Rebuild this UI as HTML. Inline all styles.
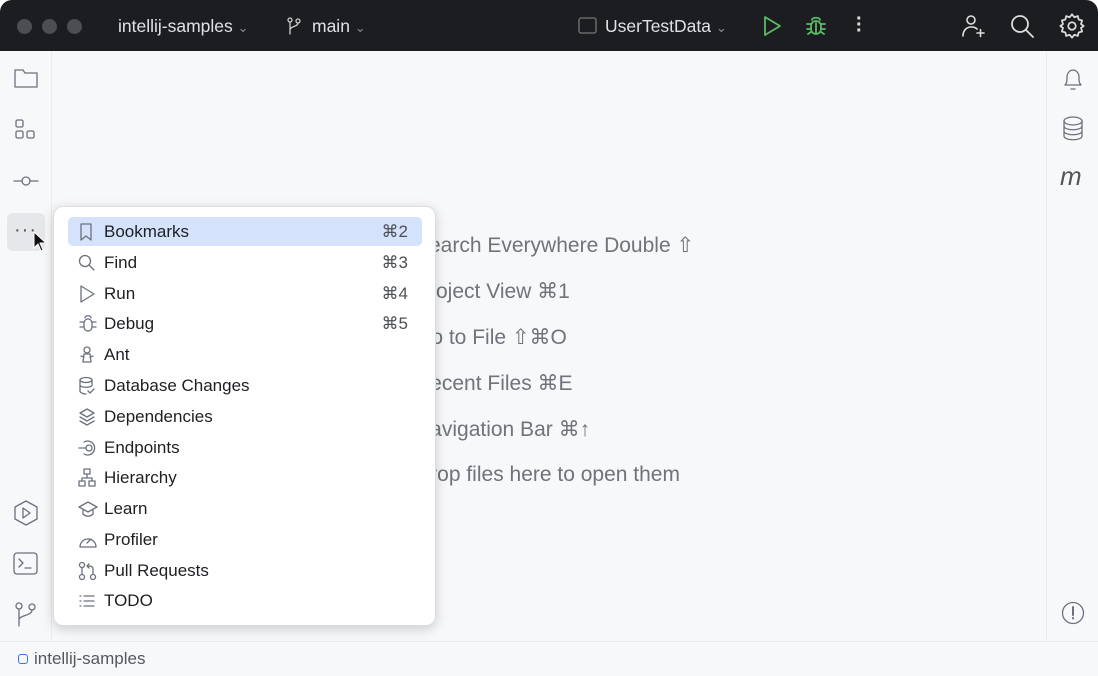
<!DOCTYPE html>
<html><head><meta charset="utf-8"><style>
*{margin:0;padding:0;box-sizing:border-box}
body{width:1098px;height:676px;background:#fff;font-family:"Liberation Sans",sans-serif;overflow:hidden;position:relative}
.win{position:absolute;left:0;top:0;width:1098px;height:676px;background:#f7f8fa;border-radius:12px 12px 0 0;overflow:hidden}
.title{position:absolute;left:0;top:0;width:1098px;height:51px;background:#1c1d20;color:#dfe1e5;font-size:17.5px}
.dot{position:absolute;top:19px;width:15px;height:15px;border-radius:50%;background:#4d4e52}
.t{position:absolute;top:16px}
.left{position:absolute;left:0;top:51px;width:52px;height:590px;border-right:1px solid #ebecf0}
.right{position:absolute;left:1046px;top:51px;width:52px;height:590px;border-left:1px solid #ebecf0}
.status{position:absolute;left:0;top:641px;width:1098px;height:35px;border-top:1px solid #ebecf0;font-size:17px;color:#55585e}
.hint{position:absolute;left:415px;font-size:21px;color:#6f737a;white-space:nowrap}
.menu{position:absolute;left:53px;top:206px;width:383px;height:420px;background:#fff;border-radius:10px;box-shadow:0 3px 12px rgba(0,0,0,.18);border:1px solid #dcdde0}
.it{position:absolute;left:14px;width:354px;height:29px;font-size:17px;color:#1e1f22;border-radius:5px}
.it span.l{position:absolute;left:36px;top:5px}
.it span.k{position:absolute;right:14px;top:5px;color:#4c4f55}
.it svg{position:absolute;left:10px;top:5px}
svg{fill:none;stroke:#6c707e;stroke-width:1.3;stroke-linecap:round;stroke-linejoin:round}
</style></head><body><div class="win">
<div class="title">
<div class="dot" style="left:17px"></div><div class="dot" style="left:42px"></div><div class="dot" style="left:67px"></div>
<div class="t" style="left:118px">intellij-samples <span style="color:#8a8c90;font-size:13px">&#8964;</span></div>
<svg style="position:absolute;left:286px;top:16px" width="16" height="20" viewBox="0 0 16 20"><g style="stroke:#ccc"><circle cx="4" cy="4" r="2"/><circle cx="12" cy="5" r="2"/><path d="M4 6v12M12 7c0 4-8 3-8 7"/></g></svg>
<div class="t" style="left:312px">main <span style="color:#8a8c90;font-size:13px">&#8964;</span></div>
<svg style="position:absolute;left:578px;top:17px" width="19" height="17"><rect x="1" y="1" width="17" height="15" rx="2" style="stroke:#777"/></svg>
<div class="t" style="left:605px">UserTestData <span style="color:#8a8c90;font-size:13px">&#8964;</span></div>
<svg style="position:absolute;left:762px;top:15px" width="20" height="22"><path d="M3 2l15 9-15 9z" style="stroke:#5fb865;stroke-width:1.8"/></svg>
<svg style="position:absolute;left:804px;top:14px" width="24" height="24" viewBox="0 0 24 24"><g style="stroke:#5fb865;stroke-width:1.8"><path d="M8 6c0-3 8-3 8 0"/><rect x="7" y="7" width="10" height="13" rx="5"/><path d="M12 9v10M3 10h4M17 10h4M3 15h4M17 15h4M4 20l3-2M20 20l-3-2"/></g></svg>
<div style="position:absolute;left:856px;top:16px;width:4px;height:20px;color:#ddd;font-size:20px;line-height:6px;font-weight:bold">·<br>·<br>·</div>
<svg style="position:absolute;left:958px;top:12px" width="28" height="28" viewBox="0 0 28 28"><g style="stroke:#ddd;stroke-width:1.6"><circle cx="13" cy="8" r="4"/><path d="M5 24c0-6 4-9 8-9s5 1 6 2M19 21h7M22.5 17.5v7"/></g></svg>
<svg style="position:absolute;left:1009px;top:13px" width="26" height="26"><g style="stroke:#ddd;stroke-width:1.8"><circle cx="11" cy="11" r="8"/><path d="M17 17l7 7"/></g></svg>
<svg style="position:absolute;left:1058px;top:12px" width="28" height="28" viewBox="0 0 24 24"><g style="stroke:#ddd;stroke-width:1.5"><circle cx="12" cy="12" r="3.2"/><path d="M12 2l2 2.5 3-1 .7 3 3 .8-1 3 2.3 1.7-2.3 1.7 1 3-3 .8-.7 3-3-1L12 22l-2-2.5-3 1-.7-3-3-.8 1-3L2 12l2.3-1.7-1-3 3-.8.7-3 3 1z"/></g></svg>
</div>
<div class="left">
<svg style="position:absolute;left:13px;top:16px" width="26" height="22"><path d="M2 3h8l2 3h12v14H2z"/></svg>
<svg style="position:absolute;left:14px;top:67px" width="24" height="24"><rect x="2" y="2" width="7" height="7" rx="1.5"/><rect x="2" y="13" width="7" height="7" rx="1.5"/><rect x="13" y="13" width="7" height="7" rx="1.5"/></svg>
<svg style="position:absolute;left:12px;top:120px" width="28" height="20"><circle cx="14" cy="10" r="4"/><path d="M2 10h8M18 10h8"/></svg>
<div style="position:absolute;left:7px;top:162px;width:38px;height:38px;background:#e6e7ea;border-radius:6px"></div>
<div style="position:absolute;left:14px;top:168px;font-size:20px;color:#555;letter-spacing:1px">···</div>
<svg style="position:absolute;left:32px;top:180px" width="16" height="22" viewBox="0 0 16 22"><path d="M2 1v16l4-4 3 7 2-1-3-7h6z" style="fill:#111;stroke:#fff;stroke-width:1"/></svg>
<svg style="position:absolute;left:12px;top:448px" width="28" height="28"><path d="M14 2l11 6v12l-11 6-11-6V8z"/><path d="M11 9l7 5-7 5z"/></svg>
<svg style="position:absolute;left:12px;top:500px" width="28" height="26"><rect x="2" y="2" width="23" height="21" rx="3"/><path d="M7 8l4 4-4 4M13 17h6"/></svg>
<svg style="position:absolute;left:13px;top:550px" width="26" height="28"><circle cx="6" cy="5" r="3"/><circle cx="19" cy="6" r="3"/><path d="M6 8v17M19 9c0 6-13 5-13 10"/></svg>
</div>
<div class="right">
<svg style="position:absolute;left:13px;top:14px" width="26" height="28"><path d="M5 20c2-2 2-4 2-8s3-7 6-7 6 3 6 7 0 6 2 8z M11 24h4"/></svg>
<svg style="position:absolute;left:13px;top:64px" width="26" height="28"><ellipse cx="13" cy="6" rx="9" ry="4"/><path d="M4 6v15c0 5 18 5 18 0V6M4 11c0 5 18 5 18 0M4 16c0 5 18 5 18 0"/></svg>
<div style="position:absolute;left:13px;top:110px;font-size:26px;font-style:italic;color:#555">m</div>
<svg style="position:absolute;left:13px;top:549px" width="26" height="26"><circle cx="13" cy="13" r="10.5"/><path d="M13 7v8M13 18v.5" style="stroke-width:2"/></svg>
</div>
<div class="hint" style="top:233px">Search Everywhere Double ⇧</div>
<div class="hint" style="top:279px">Project View ⌘1</div>
<div class="hint" style="top:325px">Go to File ⇧⌘O</div>
<div class="hint" style="top:371px">Recent Files ⌘E</div>
<div class="hint" style="top:417px">Navigation Bar ⌘↑</div>
<div class="hint" style="top:463px">Drop files here to open them</div>
<div class="status"><div style="position:absolute;left:18px;top:12px;width:10px;height:10px;border:1.5px solid #3574f0;border-radius:3px"></div><div style="position:absolute;left:34px;top:7px">intellij-samples</div></div>
<div class="menu">
<div class="it" style="top:10px;background:#d4e2fc"><svg width="16" height="20"><path d="M3 2h10v16l-5-4-5 4z"/></svg><span class="l">Bookmarks</span><span class="k">⌘2</span></div>
<div class="it" style="top:41px"><svg width="18" height="20"><circle cx="7" cy="8" r="5.5"/><path d="M11 12l5 5"/></svg><span class="l">Find</span><span class="k">⌘3</span></div>
<div class="it" style="top:72px"><svg width="18" height="20"><path d="M3 2l13 8-13 8z"/></svg><span class="l">Run</span><span class="k">⌘4</span></div>
<div class="it" style="top:102px"><svg width="20" height="20"><path d="M7 4c0-3 6-3 6 0"/><rect x="6" y="5" width="8" height="12" rx="4"/><path d="M2 8h4M14 8h4M2 13h4M14 13h4"/></svg><span class="l">Debug</span><span class="k">⌘5</span></div>
<div class="it" style="top:133px"><svg width="18" height="20"><circle cx="9" cy="5" r="3"/><path d="M6 9h6l1 8H5zM3 11l3 1M15 11l-3 1"/></svg><span class="l">Ant</span></div>
<div class="it" style="top:164px"><svg width="18" height="20"><ellipse cx="8" cy="4" rx="6" ry="2.5"/><path d="M2 4v11c0 2 4 3 6 3M14 4v5M2 9c0 3 12 3 12 0M10 15l2 2 4-4"/></svg><span class="l">Database Changes</span></div>
<div class="it" style="top:195px"><svg width="18" height="20"><path d="M9 2l7 4-7 4-7-4zM2 10l7 4 7-4M2 14l7 4 7-4"/></svg><span class="l">Dependencies</span></div>
<div class="it" style="top:226px"><svg width="20" height="20"><circle cx="11" cy="10" r="3"/><path d="M1 10h7M6 4a7 7 0 1 1 0 12"/></svg><span class="l">Endpoints</span></div>
<div class="it" style="top:256px"><svg width="18" height="20"><rect x="6" y="1" width="6" height="5"/><rect x="1" y="13" width="6" height="5"/><rect x="11" y="13" width="6" height="5"/><path d="M9 6v4M4 13v-3h10v3"/></svg><span class="l">Hierarchy</span></div>
<div class="it" style="top:287px"><svg width="20" height="20"><path d="M1 8l9-5 9 5-9 5zM5 10v5c3 3 7 3 10 0v-5"/></svg><span class="l">Learn</span></div>
<div class="it" style="top:318px"><svg width="20" height="20"><path d="M2 17a8 8 0 1 1 16 0z M9 13l4-4"/></svg><span class="l">Profiler</span></div>
<div class="it" style="top:349px"><svg width="20" height="20"><circle cx="4" cy="4" r="2.5"/><circle cx="4" cy="16" r="2.5"/><circle cx="15" cy="16" r="2.5"/><path d="M4 7v6M15 13V8c0-3-3-3-5-3M11 3l-2 2 2 2"/></svg><span class="l">Pull Requests</span></div>
<div class="it" style="top:379px"><svg width="18" height="20"><path d="M2 5h1M6 5h10M2 10h1M6 10h10M2 15h1M6 15h10"/></svg><span class="l">TODO</span></div>
</div>
</div></body></html>
